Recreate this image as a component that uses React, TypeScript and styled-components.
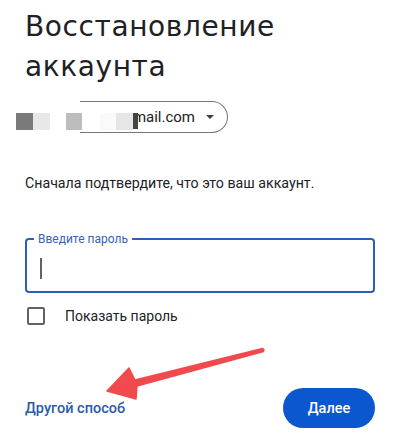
import React from "react";
import styled, { createGlobalStyle } from "styled-components";

const GlobalStyle = createGlobalStyle`
  html, body {
    margin: 0;
    padding: 0;
    background: #ffffff;
  }
  body {
    font-family: Roboto, "Noto Sans", Arial, sans-serif;
    color: #202124;
  }
`;

const Page = styled.div`
  position: relative;
  width: 400px;
  height: 441px;
  padding: 0 25px;
  box-sizing: border-box;
  overflow: hidden;
`;

const Title = styled.h1`
  margin: 0;
  padding-top: 7px;
  font-family: "DejaVu Sans", "Open Sans", sans-serif;
  font-size: 28px;
  line-height: 40px;
  font-weight: 400;
  color: #202124;
  letter-spacing: 0.6px;
`;

const ChipRow = styled.div`
  position: relative;
  margin-top: 14px;
  height: 32px;
  display: flex;
`;

const Chip = styled.div`
  margin-left: 55px;
  width: 148px;
  height: 32px;
  box-sizing: border-box;
  border: 1px solid #747775;
  border-left: none;
  border-radius: 0 16px 16px 0;
  display: flex;
  align-items: center;
  justify-content: flex-end;
  padding-right: 13px;
  gap: 11px;
  font-size: 15px;
  color: #202124;
`;

const Caret = styled.span`
  width: 0;
  height: 0;
  border-left: 4px solid transparent;
  border-right: 4px solid transparent;
  border-top: 4px solid #3c4043;
`;

const Mask = styled.div`
  position: absolute;
  left: -9px;
  top: 0;
  height: 32px;
  display: flex;
  align-items: center;
`;

const Block = styled.span<{ $w: number; $c: string; $h?: number }>`
  display: block;
  width: ${(p) => p.$w}px;
  height: ${(p) => p.$h ?? 17}px;
  margin-top: 8px;
  background: ${(p) => p.$c};
`;

const Subtitle = styled.p`
  margin: 40px 0 0;
  font-size: 14.2px;
  line-height: 20px;
  color: #202124;
`;

const InputBox = styled.div`
  position: relative;
  margin-top: 45px;
  height: 55px;
  box-sizing: border-box;
  border: 2px solid #2b5fb8;
  border-radius: 4px;
  display: flex;
  align-items: center;
  padding-left: 13px;
`;

const FloatLabel = styled.span`
  position: absolute;
  top: -9px;
  left: 7px;
  padding: 0 4px;
  background: #ffffff;
  font-size: 12px;
  line-height: 16px;
  color: #3564b3;
`;

const Cursor = styled.span`
  display: block;
  width: 1.5px;
  height: 21px;
  margin-top: 6px;
  background: #5f6368;
`;

const CheckRow = styled.label`
  display: flex;
  align-items: center;
  gap: 20px;
  margin-top: 14px;
  padding-left: 2px;
  font-size: 14px;
  color: #202124;
`;

const Box = styled.span`
  width: 18px;
  height: 18px;
  box-sizing: border-box;
  border: 2px solid #5f6368;
  border-radius: 2px;
`;

const Footer = styled.div`
  margin-top: 63px;
  display: flex;
  align-items: center;
  justify-content: space-between;
`;

const LinkButton = styled.a`
  font-size: 14.5px;
  font-weight: 500;
  color: #2c5ca8;
  text-decoration: none;
`;

const Primary = styled.button`
  width: 92px;
  height: 40px;
  border: none;
  border-radius: 20px;
  background: #0b57d0;
  color: #ffffff;
  font-family: inherit;
  font-size: 14.5px;
  font-weight: 500;
`;

const Overlay = styled.svg`
  position: absolute;
  left: 0;
  top: 0;
  pointer-events: none;
`;

export default function App() {
  return (
    <>
      <GlobalStyle />
      <Page>
        <Title>
          Восстановление
          <br />
          аккаунта
        </Title>
        <ChipRow>
          <Chip>
            <span>mail.com</span>
            <Caret />
          </Chip>
          <Mask>
            <Block $w={17} $c="#7a7a7a" />
            <Block $w={17} $c="#e8e8e8" />
            <Block $w={16} $c="#ffffff" />
            <Block $w={16} $c="#bdbdbd" />
            <Block $w={18} $c="#ffffff" />
            <Block $w={16} $c="#fafafa" />
            <Block $w={17} $c="#e6e6e6" />
            <Block $w={5} $c="#444444" $h={16} />
          </Mask>
        </ChipRow>
        <Subtitle>Сначала подтвердите, что это ваш аккаунт.</Subtitle>
        <InputBox>
          <FloatLabel>Введите пароль</FloatLabel>
          <Cursor />
        </InputBox>
        <CheckRow>
          <Box />
          Показать пароль
        </CheckRow>
        <Footer>
          <LinkButton>Другой способ</LinkButton>
          <Primary>Далее</Primary>
        </Footer>
        <Overlay width="400" height="441" viewBox="0 0 400 441">
          <polygon
            points="107,391 129,368 135,380 262.6,348.5 264,350 263.4,351.5 137,386 136,399"
            fill="#f04a4e"
            stroke="#f04a4e"
            strokeWidth="1.5"
            strokeLinejoin="round"
          />
        </Overlay>
      </Page>
    </>
  );
}
